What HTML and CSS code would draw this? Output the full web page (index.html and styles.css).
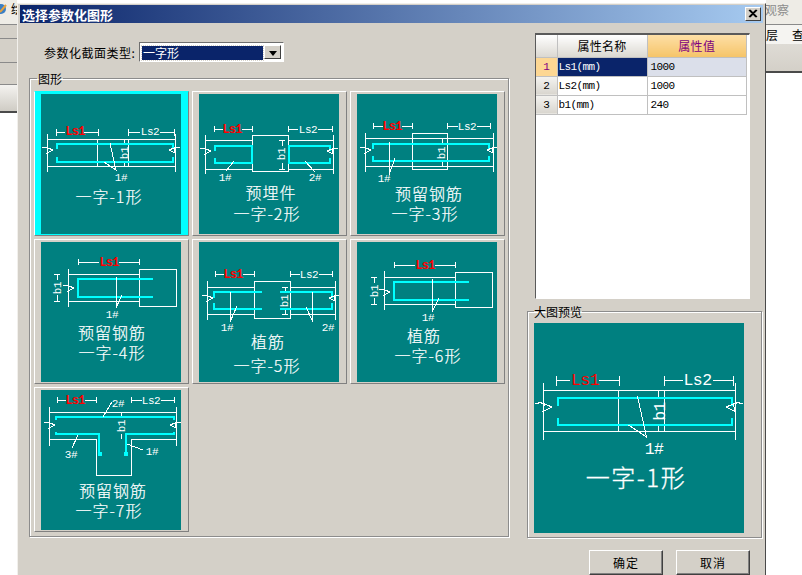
FILE: index.html
```html
<!DOCTYPE html>
<html lang="zh-CN">
<head>
    <meta charset="UTF-8">
    <title>选择参数化图形</title>
    <link rel="stylesheet" href="styles.css">
</head>
<body>
    <!-- Ventana de fondo, lado izquierdo -->
    <div class="back-left">
        <div class="back-top">
            <svg class="app-icon" width="8" height="12" viewBox="0 0 8 12">
                <circle cx="1" cy="6" r="5" fill="#3b7fc4"/>
                <path d="M0 9L6 2" stroke="#e8a23c" stroke-width="2"/>
            </svg>
            <span class="back-char">绘</span>
        </div>
        <div class="back-row h13"></div>
        <div class="back-row h23"></div>
        <div class="back-row h21"></div>
        <div class="back-gradient"></div>
    </div>

    <!-- Dialogo -->
    <div class="dialog">
        <div class="titlebar">
            <span>选择参数化图形</span>
            <span class="close-btn">
                <svg width="10" height="10" viewBox="0 0 10 10"><path d="M1 1L8 8M8 1L1 8M2 1L9 8M9 1L2 8" stroke="#000" stroke-width="1.2"/></svg>
            </span>
        </div>

        <div class="content">
            <div class="left-pane">
                <div class="type-row">
                    <span class="type-label">参数化截面类型:</span>
                    <div class="combo">
                        <span class="combo-value">一字形</span>
                        <span class="combo-btn"></span>
                    </div>
                </div>

                <fieldset class="group">
                    <legend>图形</legend>
                    <div class="tiles">
                        <div class="tile selected">
                            <svg class="shape" viewBox="0 0 140 140">
                                <defs>
                                    <path id="brk" class="ln" d="M-5 0L-2 -1L1 0L6 2L0 5L1 0"/>
                                </defs>
                                <path class="ln" d="M15 35V42M15 38H24M43 38H57M57 35V42M87 35V42M87 38H99M119 38H133M133 35V42"/>
                                <path class="ln" d="M6 45H134M6 72H134M6 40V78M134 40V78M56 45V72M87 45V72M83 45V50M83 68V72"/>
                                <path class="rb" d="M16 55V50H132V55M16 63V68H132V63"/>
                                <path class="ln" d="M69 49L75 76L63 68"/>
                                <use href="#brk" x="6" y="54"/>
                                <use href="#brk" transform="translate(134 54) scale(-1 1)"/>
                                <text class="dim red" x="34" y="41">Ls1</text>
                                <text class="dim" x="109" y="41">Ls2</text>
                                <text class="dim" transform="rotate(-90 87 59)" x="87" y="59">b1</text>
                                <text class="dim" x="80" y="87">1#</text>
                                <text class="cap" x="68" y="109">一字-1形</text>
                            </svg>
                        </div>

                        <div class="tile">
                            <svg class="shape" viewBox="0 0 140 140">
                                <path class="ln" d="M15 32V38M15 35H24M43 35H53M53 32V38M89 32V38M89 35H99M119 35H133M133 32V38"/>
                                <path class="ln" d="M6 46H53M6 75H53M89 46H134M89 75H134M6 41V80M134 41V80"/>
                                <path class="ln" d="M53 41H89V77H53ZM80 46H86M83 46V52M83 69V75M80 75H86"/>
                                <path class="rb" d="M16 57V52H53V69H16V64M131 57V52H90V69H131V64"/>
                                <path class="ln" d="M35 67L27 77M106 67L116 78"/>
                                <use href="#brk" x="6" y="55"/>
                                <use href="#brk" transform="translate(134 55) scale(-1 1)"/>
                                <text class="dim red" x="33" y="39">Ls1</text>
                                <text class="dim" x="109" y="39">Ls2</text>
                                <text class="dim" transform="rotate(-90 86 60)" x="86" y="60">b1</text>
                                <text class="dim" x="26" y="87">1#</text>
                                <text class="dim" x="116" y="87">2#</text>
                                <text class="cap" x="72" y="105">预埋件</text>
                                <text class="cap" x="68" y="126">一字-2形</text>
                            </svg>
                        </div>

                        <div class="tile">
                            <svg class="shape" viewBox="0 0 140 140">
                                <path class="ln" d="M16 29V35M16 32H26M45 32H55M55 29V35M90 29V35M90 32H101M120 32H133M133 29V35"/>
                                <path class="ln" d="M8 44H136M8 72H136M8 39V78M136 39V78"/>
                                <path class="ln" d="M55 39H90V75H55ZM85 44V50M85 67V72"/>
                                <path class="rb" d="M16 55V50H132V55M16 62V67H132V62"/>
                                <path class="ln" d="M32 48V81L38 64"/>
                                <use href="#brk" x="8" y="54"/>
                                <use href="#brk" transform="translate(136 54) scale(-1 1)"/>
                                <text class="dim red" x="35" y="36">Ls1</text>
                                <text class="dim" x="110" y="36">Ls2</text>
                                <text class="dim" transform="rotate(-90 88 59)" x="88" y="59">b1</text>
                                <text class="dim" x="27" y="88">1#</text>
                                <text class="cap" x="72" y="106">预留钢筋</text>
                                <text class="cap" x="68" y="126">一字-3形</text>
                            </svg>
                        </div>

                        <div class="tile">
                            <svg class="shape" viewBox="0 0 140 140">
                                <path class="ln" d="M37 17V23M37 20H58M78 20H98M98 17V23"/>
                                <path class="ln" d="M27 32H98M27 59H98M27 27V65M98 27H135V64H98Z"/>
                                <path class="ln" d="M13 32H19M16 32V38M16 53V59M13 59H19"/>
                                <path class="rb" d="M112 37H37V55H112"/>
                                <path class="ln" d="M76 35L75 66L81 53"/>
                                <use href="#brk" x="27" y="44"/>
                                <text class="dim red" x="68" y="24">Ls1</text>
                                <text class="dim" transform="rotate(-90 20 46)" x="20" y="46">b1</text>
                                <text class="dim" x="71" y="76">1#</text>
                                <text class="cap" x="71" y="97">预留钢筋</text>
                                <text class="cap" x="71" y="117">一字-4形</text>
                            </svg>
                        </div>

                        <div class="tile">
                            <svg class="shape" viewBox="0 0 140 140">
                                <path class="ln" d="M16 29V35M16 32H25M44 32H55M55 29V35M91 29V35M91 32H101M120 32H133M133 29V35"/>
                                <path class="ln" d="M8 45H55M8 72H55M91 45H136M91 72H136M8 39V78M136 39V78"/>
                                <path class="ln" d="M55 39H91V76H55ZM83 45H89M86 45V50M86 68V72M83 72H89"/>
                                <path class="rb" d="M15 56V50H63M15 61V67H63M81 50H133V56M81 67H133V61"/>
                                <path class="ln" d="M32 50L31 80L38 64M113 50L114 80L107 65"/>
                                <use href="#brk" x="8" y="54"/>
                                <use href="#brk" transform="translate(136 54) scale(-1 1)"/>
                                <text class="dim red" x="34" y="36">Ls1</text>
                                <text class="dim" x="110" y="36">Ls2</text>
                                <text class="dim" transform="rotate(-90 89 59)" x="89" y="59">b1</text>
                                <text class="dim" x="28" y="89">1#</text>
                                <text class="dim" x="129" y="89">2#</text>
                                <text class="cap" x="69" y="106">植筋</text>
                                <text class="cap" x="68" y="130">一字-5形</text>
                            </svg>
                        </div>

                        <div class="tile">
                            <svg class="shape" viewBox="0 0 140 140">
                                <path class="ln" d="M37 20V26M37 23H58M78 23H98M98 20V26"/>
                                <path class="ln" d="M27 35H98M27 62H98M27 29V68M98 30H135V65H98Z"/>
                                <path class="ln" d="M14 35H20M17 35V41M17 56V62M14 62H20"/>
                                <path class="rb" d="M112 40H37V58H112"/>
                                <path class="ln" d="M76 37L75 70L82 56"/>
                                <use href="#brk" x="27" y="48"/>
                                <text class="dim red" x="68" y="27">Ls1</text>
                                <text class="dim" transform="rotate(-90 21 49)" x="21" y="49">b1</text>
                                <text class="dim" x="71" y="79">1#</text>
                                <text class="cap" x="67" y="100">植筋</text>
                                <text class="cap" x="71" y="120">一字-6形</text>
                            </svg>
                        </div>

                        <div class="tile">
                            <svg class="shape" viewBox="0 0 140 140">
                                <path class="ln" d="M16 7V13M16 10H25M44 10H55M55 7V13M90 7V13M90 10H101M120 10H133M133 7V13"/>
                                <path class="ln" d="M8 22H135M8 49H55M90 49H135M8 17V56M135 17V56M55 49V85H90V49"/>
                                <path class="ln" d="M80 22V27M80 44V49"/>
                                <path class="rb" d="M15 30V27H133V30M15 42V44H58V64M133 42V44H85V64"/>
                                <path class="dot" d="M57 62h4v4h-4zM83 62h4v4h-4z"/>
                                <path class="ln" d="M62 27L71 12M37 45L31 58M86 54L102 60"/>
                                <use href="#brk" x="8" y="33"/>
                                <use href="#brk" transform="translate(135 33) scale(-1 1)"/>
                                <text class="dim red" x="34" y="14">Ls1</text>
                                <text class="dim" x="110" y="14">Ls2</text>
                                <text class="dim" transform="rotate(-90 84 36)" x="84" y="36">b1</text>
                                <text class="dim" x="77" y="17">2#</text>
                                <text class="dim" x="30" y="68">3#</text>
                                <text class="dim" x="111" y="65">1#</text>
                                <text class="cap" x="72" y="107">预留钢筋</text>
                                <text class="cap" x="68" y="127">一字-7形</text>
                            </svg>
                        </div>
                    </div>
                </fieldset>
            </div>

            <div class="right-pane">
                <div class="grid-box">
                    <table class="prop-table">
                        <tr class="head">
                            <th class="idx"></th>
                            <th class="name">属性名称</th>
                            <th class="value active">属性值</th>
                        </tr>
                        <tr class="current">
                            <td class="idx">1</td>
                            <td class="name">Ls1(mm)</td>
                            <td class="value">1000</td>
                        </tr>
                        <tr>
                            <td class="idx">2</td>
                            <td class="name">Ls2(mm)</td>
                            <td class="value">1000</td>
                        </tr>
                        <tr>
                            <td class="idx">3</td>
                            <td class="name">b1(mm)</td>
                            <td class="value">240</td>
                        </tr>
                    </table>
                </div>

                <fieldset class="group preview">
                    <legend>大图预览</legend>
                    <svg class="shape big" viewBox="0 0 140 140">
                        <path class="ln" d="M15 35V42M15 38H24M43 38H57M57 35V42M87 35V42M87 38H99M119 38H133M133 35V42"/>
                        <path class="ln" d="M6 45H134M6 72H134M6 40V78M134 40V78M56 45V72M87 45V72M83 45V50M83 68V72"/>
                        <path class="rb" d="M16 55V50H132V55M16 63V68H132V63"/>
                        <path class="ln" d="M69 49L75 76L63 68"/>
                        <use href="#brk" x="6" y="54"/>
                        <use href="#brk" transform="translate(134 54) scale(-1 1)"/>
                        <text class="dim red" x="34" y="41">Ls1</text>
                        <text class="dim" x="109" y="41">Ls2</text>
                        <text class="dim" transform="rotate(-90 87 59)" x="87" y="59">b1</text>
                        <text class="dim" x="80" y="87">1#</text>
                        <text class="cap" x="68" y="109">一字-1形</text>
                    </svg>
                </fieldset>

                <div class="buttons">
                    <button class="btn">确定</button>
                    <button class="btn">取消</button>
                </div>
            </div>
        </div>
    </div>

    <!-- Ventana de fondo, lado derecho -->
    <div class="back-right">
        <div class="back-top"><span class="menu-char">观察</span></div>
        <div class="tool-row">
            <span>层</span>
            <span class="tool-sep"></span>
            <span>查</span>
        </div>
        <div class="tool-gray"></div>
    </div>
</body>
</html>
```

FILE: styles.css
```css
/* General */
* {
    margin: 0;
    padding: 0;
    box-sizing: border-box;
}

body {
    display: flex;
    width: 802px;
    height: 575px;
    overflow: hidden;
    background-color: #ffffff;
    font-family: "Noto Sans CJK SC", "Liberation Sans", sans-serif;
    font-size: 12px;
    color: #000000;
}

/* Background window */
.back-left {
    width: 17px;
    flex-shrink: 0;
    overflow: hidden;
}

.back-right {
    width: 36px;
    flex-shrink: 0;
    overflow: hidden;
}

.back-top {
    display: flex;
    align-items: center;
    height: 25px;
    background-color: #eeece6;
    border-bottom: 1px solid #8a8a8a;
}

.app-icon {
    flex-shrink: 0;
    margin-top: -6px;
}

.back-char {
    margin: -8px 0 0 3px;
}

.back-row {
    background-color: #d4d0c8;
    border-bottom: 1px solid #8a8a8a;
}

.h13 { height: 14px; }
.h23 { height: 24px; }
.h21 { height: 22px; }

.back-gradient {
    height: 28px;
    background: linear-gradient(#f4f3f0, #cfccc4);
    border-bottom: 2px solid #4a4a4a;
}

.menu-char {
    margin: -6px 0 0 -1px;
    color: #8c8c8c;
    white-space: nowrap;
}

.tool-row {
    display: flex;
    align-items: center;
    gap: 7px;
    height: 19px;
    background-color: #f5f4f1;
    white-space: nowrap;
}

.tool-sep {
    width: 1px;
    height: 15px;
    background-color: #a8a8a8;
}

.tool-gray {
    height: 29px;
    background: linear-gradient(#dedbd5, #d4d0c8);
    border-bottom: 2px solid #4a4a4a;
}

/* Dialog */
.dialog {
    width: 749px;
    height: 572px;
    margin-top: 3px;
    flex-shrink: 0;
    background-color: #d4d0c8;
    border-left: 1px solid #f2f0ec;
    border-top: 1px solid #f2f0ec;
    border-right: 1px solid #4a4a4a;
    padding: 1px 2px 0 2px;
}

.titlebar {
    display: flex;
    justify-content: space-between;
    align-items: center;
    height: 18px;
    padding: 0 2px;
    background: linear-gradient(to right, #0a246a, #a6caf0);
    color: #ffffff;
    font-size: 13px;
    font-weight: bold;
}

.close-btn {
    display: flex;
    align-items: center;
    justify-content: center;
    width: 16px;
    height: 14px;
    background-color: #d4d0c8;
    border: 1px solid;
    border-color: #ffffff #404040 #404040 #ffffff;
}

.content {
    display: flex;
}

/* Left side */
.left-pane {
    width: 480px;
    margin-left: 9px;
}

.type-row {
    display: flex;
    align-items: center;
    height: 20px;
    margin: 19px 0 10px 15px;
}

.type-label {
    width: 95px;
    letter-spacing: 0.5px;
    white-space: nowrap;
}

.combo {
    display: flex;
    width: 145px;
    height: 20px;
    padding: 2px;
    background-color: #ffffff;
    border: 1px solid;
    border-color: #6e6e6e #ffffff #ffffff #6e6e6e;
}

.combo-value {
    flex: 1;
    height: 14px;
    margin: 1px 1px 0 0;
    padding-left: 1px;
    background-color: #0a246a;
    color: #ffffff;
    line-height: 14px;
    outline: 1px dotted #d4d0c8;
}

.combo-btn {
    position: relative;
    width: 17px;
    background-color: #d4d0c8;
    border: 1px solid;
    border-color: #ffffff #404040 #404040 #ffffff;
}

.combo-btn::after {
    content: "";
    position: absolute;
    left: 4px;
    top: 5px;
    border: 4px solid transparent;
    border-top: 5px solid #000000;
    border-bottom: 0;
}

.group {
    border: 1px solid #8c8c8c;
    box-shadow: inset 1px 1px 0 #ffffff, 1px 1px 0 #ffffff;
}

.group legend {
    margin-left: 3px;
    padding: 0 1px;
    line-height: 13px;
    font-size: 12px;
}

.left-pane .group {
    height: 465px;
    padding: 6px 0 0 4px;
}

.tiles {
    display: grid;
    grid-template-columns: repeat(3, 155px);
    grid-auto-rows: 145px;
    gap: 3px;
}

.tile {
    padding: 2px 7px 1px 6px;
    border: 1px solid;
    border-color: #ffffff #808080 #808080 #ffffff;
}

.tile.selected {
    background-color: #00ffff;
    border-top-color: #00ffff;
}

/* Drawings */
.shape {
    display: block;
    width: 140px;
    height: 140px;
    background-color: #008080;
}

.shape.big {
    width: 210px;
    height: 210px;
}

.ln {
    fill: none;
    stroke: #ffffff;
    stroke-width: 1px;
    vector-effect: non-scaling-stroke;
    shape-rendering: crispEdges;
}

.rb {
    fill: none;
    stroke: #00ffff;
    stroke-width: 2px;
    vector-effect: non-scaling-stroke;
    shape-rendering: crispEdges;
}

.dot {
    fill: #00ffff;
}

.dim {
    fill: #ffffff;
    font-family: "Liberation Mono", monospace;
    font-size: 11px;
    letter-spacing: -0.4px;
    text-anchor: middle;
}

.dim.red {
    fill: #ff0000;
    font-size: 12px;
    font-weight: bold;
    letter-spacing: -0.8px;
}

.big .dim.red {
    font-size: 11px;
    font-weight: normal;
    letter-spacing: -0.4px;
}

.cap {
    fill: #ffffff;
    stroke: #ffffff;
    stroke-width: 0.2px;
    font-size: 16px;
    font-weight: 300;
    letter-spacing: 1px;
    text-anchor: middle;
}

/* Right side */
.right-pane {
    width: 236px;
    margin-left: 18px;
}

.grid-box {
    width: 215px;
    height: 266px;
    margin: 10px 0 6px 8px;
    background-color: #ffffff;
    border: 1px solid;
    border-color: #5a5a5a #ffffff #ffffff #5a5a5a;
    border-top-width: 2px;
    border-left-width: 1px;
}

.prop-table {
    border-collapse: collapse;
    table-layout: fixed;
    width: 211px;
    font-family: "Liberation Mono", "Noto Sans CJK SC", monospace;
    font-size: 11px;
    letter-spacing: -0.6px;
}

.prop-table td,
.prop-table th {
    height: 19px;
    padding: 0 0 0 3px;
    border: 1px solid #c0c0c0;
    border-top: 0;
    border-left: 0;
    text-align: left;
    font-weight: normal;
    white-space: nowrap;
}

.prop-table .idx {
    width: 21px;
    padding: 0;
    text-align: center;
    background: linear-gradient(#f4f3f0, #d8d5ce);
}

.prop-table .name {
    width: 90px;
    padding-left: 1px;
}

.prop-table .head th {
    height: 22px;
    padding: 0;
    text-align: center;
    font-family: "Noto Sans CJK SC", sans-serif;
    font-size: 12px;
    letter-spacing: 0.3px;
    background: linear-gradient(#ffffff, #dbd8d1);
}

.prop-table .head .active {
    background: linear-gradient(#fddfa6, #f5c469);
    color: #800080;
}

.current .idx {
    background: #fdd793;
    color: #800080;
}

.current .name {
    background-color: #0a246a;
    color: #ffffff;
}

.current .value {
    background-color: #dbdfea;
}

.preview {
    width: 235px;
    height: 233px;
    padding: 5px 0 0 6px;
}

.preview legend {
    margin-left: 0;
    padding: 0;
}

.buttons {
    display: flex;
    justify-content: flex-end;
    gap: 13px;
    margin: 12px 13px 0 0;
}

.btn {
    width: 74px;
    height: 25px;
    background-color: #d4d0c8;
    border: 1px solid;
    border-color: #ffffff #404040 #404040 #ffffff;
    box-shadow: inset -1px -1px 0 #808080;
    font-family: "Noto Sans CJK SC", sans-serif;
    font-size: 12px;
    letter-spacing: 1px;
}
```
